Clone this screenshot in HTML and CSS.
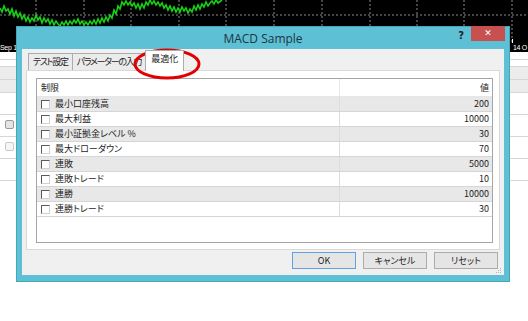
FILE: index.html
```html
<!DOCTYPE html>
<html lang="ja">
<head>
    <meta charset="UTF-8">
    <title>MACD Sample</title>
    <link rel="stylesheet" href="styles.css">
</head>
<body>

<div class="desk">
    <div class="chart">
        <svg width="528" height="43" viewBox="0 0 528 43">
            <line x1="0" y1="15" x2="528" y2="15" stroke="#8a8a8a" stroke-dasharray="2 2"/>
            <g stroke="#8a8a8a" stroke-dasharray="2 2">
                <line x1="36" y1="0" x2="36" y2="43"/>
                <line x1="84" y1="0" x2="84" y2="43"/>
                <line x1="131" y1="0" x2="131" y2="43"/>
                <line x1="179" y1="0" x2="179" y2="43"/>
                <line x1="226" y1="0" x2="226" y2="43"/>
                <line x1="274" y1="0" x2="274" y2="43"/>
                <line x1="322" y1="0" x2="322" y2="43"/>
                <line x1="370" y1="0" x2="370" y2="43"/>
                <line x1="417" y1="0" x2="417" y2="43"/>
                <line x1="464" y1="0" x2="464" y2="43"/>
                <line x1="512" y1="0" x2="512" y2="43"/>
            </g>
            <polyline fill="none" stroke="#16d016" stroke-width="1.6"
                points="0,8 2,12 4,6 6,11 8,9 10,14 12,9 14,16 16,11 18,17 20,13 22,19 24,15 26,21 28,17 30,22 32,18 34,21 36,15 38,20 40,17 42,23 44,18 46,22 48,19 50,24 52,20 54,25 56,21 58,24 60,26 62,22 64,25 66,21 68,25 70,21 72,24 74,20 76,23 78,19 80,24 82,21 84,25 86,22 88,25 90,21 92,24 94,20 96,24 98,19 100,23 102,18 104,22 106,17 108,21 110,15 112,18 114,10 116,14 118,6 120,9 122,2 124,5 126,1 128,5 130,2 132,6 134,3 136,8 138,4 140,9 142,4 144,8 146,2 148,5 150,0 152,4 154,1 156,5 158,2 160,6 162,3 164,8 166,5 168,10 170,6 172,11 174,7 176,12 178,8 180,12 182,7 184,11 186,8 188,13 190,9 192,12 194,6 196,10 198,5 200,9 202,4 204,7 206,2 208,6 210,3 212,1 214,4 216,0 218,3 222,0"/>
            <line x1="512.5" y1="39" x2="512.5" y2="43" stroke="#fff"/>
        </svg>
    </div>
    <div class="dates">
        <span>Sep 1</span>
        <span>14 O</span>
    </div>
    <div class="terminal">
        <div class="trow short"></div>
        <div class="trow tiny"></div>
        <div class="trow band"></div>
        <div class="trow band"></div>
        <div class="trow tall"></div>
        <div class="trow tall"><span class="tchk"></span></div>
        <div class="trow tall"><span class="tchk light"></span></div>
        <div class="trow tall"></div>
    </div>
</div>

<div class="dialog">
    <div class="titlebar">
        <span></span>
        <span class="title">MACD Sample</span>
        <div class="controls">
            <span class="help">?</span>
            <span class="close">✕</span>
        </div>
    </div>

    <div class="client">
        <div class="tabs">
            <div class="tab">テスト設定</div>
            <div class="tab">パラメーターの入力</div>
            <div class="tab active">最適化</div>
        </div>

        <div class="panel">
            <div class="list">
                <div class="lrow head">
                    <div class="cell">制限</div>
                    <div class="cell num">値</div>
                </div>
                <div class="lrow"><div class="cell"><span class="chk"></span>最小口座残高</div><div class="cell num">200</div></div>
                <div class="lrow"><div class="cell"><span class="chk"></span>最大利益</div><div class="cell num">10000</div></div>
                <div class="lrow"><div class="cell"><span class="chk"></span>最小証拠金レベル %</div><div class="cell num">30</div></div>
                <div class="lrow"><div class="cell"><span class="chk"></span>最大ドローダウン</div><div class="cell num">70</div></div>
                <div class="lrow"><div class="cell"><span class="chk"></span>連敗</div><div class="cell num">5000</div></div>
                <div class="lrow"><div class="cell"><span class="chk"></span>連敗トレード</div><div class="cell num">10</div></div>
                <div class="lrow"><div class="cell"><span class="chk"></span>連勝</div><div class="cell num">10000</div></div>
                <div class="lrow"><div class="cell"><span class="chk"></span>連勝トレード</div><div class="cell num">30</div></div>
            </div>
        </div>

        <div class="buttons">
            <button class="btn default">OK</button>
            <button class="btn">キャンセル</button>
            <button class="btn">リセット</button>
        </div>

        <svg class="grip" width="6" height="6" viewBox="0 0 6 6">
            <rect x="4" y="0" width="1" height="1" fill="#b5b5b5"/>
            <rect x="2" y="2" width="1" height="1" fill="#b5b5b5"/>
            <rect x="4" y="2" width="1" height="1" fill="#b5b5b5"/>
            <rect x="0" y="4" width="1" height="1" fill="#b5b5b5"/>
            <rect x="2" y="4" width="1" height="1" fill="#b5b5b5"/>
            <rect x="4" y="4" width="1" height="1" fill="#b5b5b5"/>
        </svg>
    </div>
</div>

<svg class="mark" width="72" height="36" viewBox="0 0 72 36">
    <ellipse cx="35" cy="17" rx="32" ry="14" fill="none" stroke="#e30000" stroke-width="3"/>
</svg>

</body>
</html>
```

FILE: styles.css
```css
body {
    margin: 0;
    width: 528px;
    height: 321px;
    overflow: hidden;
    position: relative;
    background-color: #fff;
    font-family: "Noto Sans CJK JP", sans-serif;
    font-feature-settings: "palt";
    font-size: 9px;
    color: #1e1e1e;
}

/* background terminal */

.chart {
    height: 43px;
    background-color: #000;
}

.chart svg {
    display: block;
}

.dates {
    height: 9px;
    background-color: #000;
    color: #fff;
    font-family: "Liberation Sans", sans-serif;
    font-size: 7px;
    letter-spacing: -0.3px;
    line-height: 9px;
    display: grid;
    grid-template-columns: 513px 1fr;
    white-space: nowrap;
    overflow: hidden;
}

.trow {
    height: 12px;
    border-bottom: 1px solid #d6d6d6;
    position: relative;
}

.trow.short {
    height: 7px;
}

.trow.tiny {
    height: 6px;
}

.trow.band {
    background-color: #ececec;
}

.trow.tall {
    height: 21px;
}

.tchk {
    position: absolute;
    left: 5px;
    top: 5px;
    width: 7px;
    height: 7px;
    border: 1px solid #9a9a9a;
    border-radius: 2px;
    background-color: #e4e4e4;
}

.tchk.light {
    border-color: #c8c8c8;
    background-color: #f6f6f6;
}

/* dialog window */

.dialog {
    position: absolute;
    left: 16px;
    top: 26px;
    width: 494px;
    height: 256px;
    box-sizing: border-box;
    border: 1px solid #46a6ba;
    background-color: #5ec0d4;
    display: flex;
    flex-direction: column;
}

.titlebar {
    height: 22px;
    display: grid;
    grid-template-columns: 1fr auto 1fr;
    align-items: center;
}

.title {
    font-family: "Open Sans", sans-serif;
    font-size: 12px;
    color: #1c3540;
}

.controls {
    justify-self: end;
    align-self: start;
    display: flex;
    align-items: flex-start;
    padding-right: 4px;
}

.help {
    font-family: "DejaVu Sans", sans-serif;
    font-weight: bold;
    font-size: 10px;
    color: #1f1f1f;
    margin-top: 3px;
    margin-right: 7px;
}

.close {
    width: 34px;
    height: 15px;
    margin-top: -1px;
    background-color: #c75050;
    color: #fff;
    text-align: center;
    font-family: "DejaVu Sans", sans-serif;
    font-weight: bold;
    font-size: 9px;
    line-height: 15px;
}

.client {
    flex: 1;
    margin: 0 5px 6px;
    padding: 0 4px;
    background-color: #f0f0f0;
    display: flex;
    flex-direction: column;
    position: relative;
}

.tabs {
    height: 21px;
    display: flex;
    align-items: flex-end;
    padding-left: 2px;
}

.tab {
    height: 17px;
    box-sizing: border-box;
    border: 1px solid #acacac;
    border-bottom: none;
    background-color: #ebebeb;
    padding: 0 4px;
    letter-spacing: -1.3px;
    line-height: 16px;
    margin-right: -1px;
    white-space: nowrap;
}

.tab.active {
    height: 21px;
    background-color: #fff;
    padding: 0 5px;
    letter-spacing: 0;
    margin: 0 -2px -1px 0;
    line-height: 15px;
    position: relative;
    z-index: 1;
}

.panel {
    height: 180px;
    box-sizing: border-box;
    border: 1px solid #d9d9d9;
    background-color: #fff;
    padding: 7px 6px 6px 9px;
}

.list {
    height: 100%;
    box-sizing: border-box;
    border: 1px solid #a5a5a5;
    background-color: #fff;
}

.lrow {
    display: grid;
    grid-template-columns: 302px 1fr;
    height: 14px;
    line-height: 14px;
    border-bottom: 1px solid #d5d5d5;
}

.lrow:nth-child(even) {
    background-color: #e8e8e8;
}

.lrow.head {
    height: 17px;
    line-height: 17px;
    border-bottom: 1px solid #e6e6e6;
}

.cell {
    padding-left: 4px;
    display: flex;
    align-items: center;
    white-space: nowrap;
}

.cell.num {
    justify-content: flex-end;
    padding: 0 3px 0 0;
    border-left: 1px solid #dcdcdc;
}

.lrow.head .cell.num {
    border-left-color: #e3e8ee;
}

.chk {
    width: 7px;
    height: 7px;
    border-top: 1px solid #5a5a5a;
    border-left: 1px solid #5a5a5a;
    border-right: 1px solid #d0d0d0;
    border-bottom: 1px solid #d0d0d0;
    background-color: #fff;
    margin-right: 5px;
}

.buttons {
    display: flex;
    justify-content: flex-end;
    gap: 7px;
    margin-top: 2px;
    padding-right: 2px;
}

.btn {
    width: 64px;
    height: 17px;
    padding: 0;
    border: 1px solid #acacac;
    background-color: #e5e5e5;
    font-family: "Noto Sans CJK JP", sans-serif;
    font-feature-settings: "palt";
    font-size: 9px;
    color: #1e1e1e;
}

.btn.default {
    border-color: #5fa2e6;
}

.grip {
    position: absolute;
    right: 2px;
    bottom: 1px;
}

.mark {
    position: absolute;
    left: 132px;
    top: 47px;
}
```
